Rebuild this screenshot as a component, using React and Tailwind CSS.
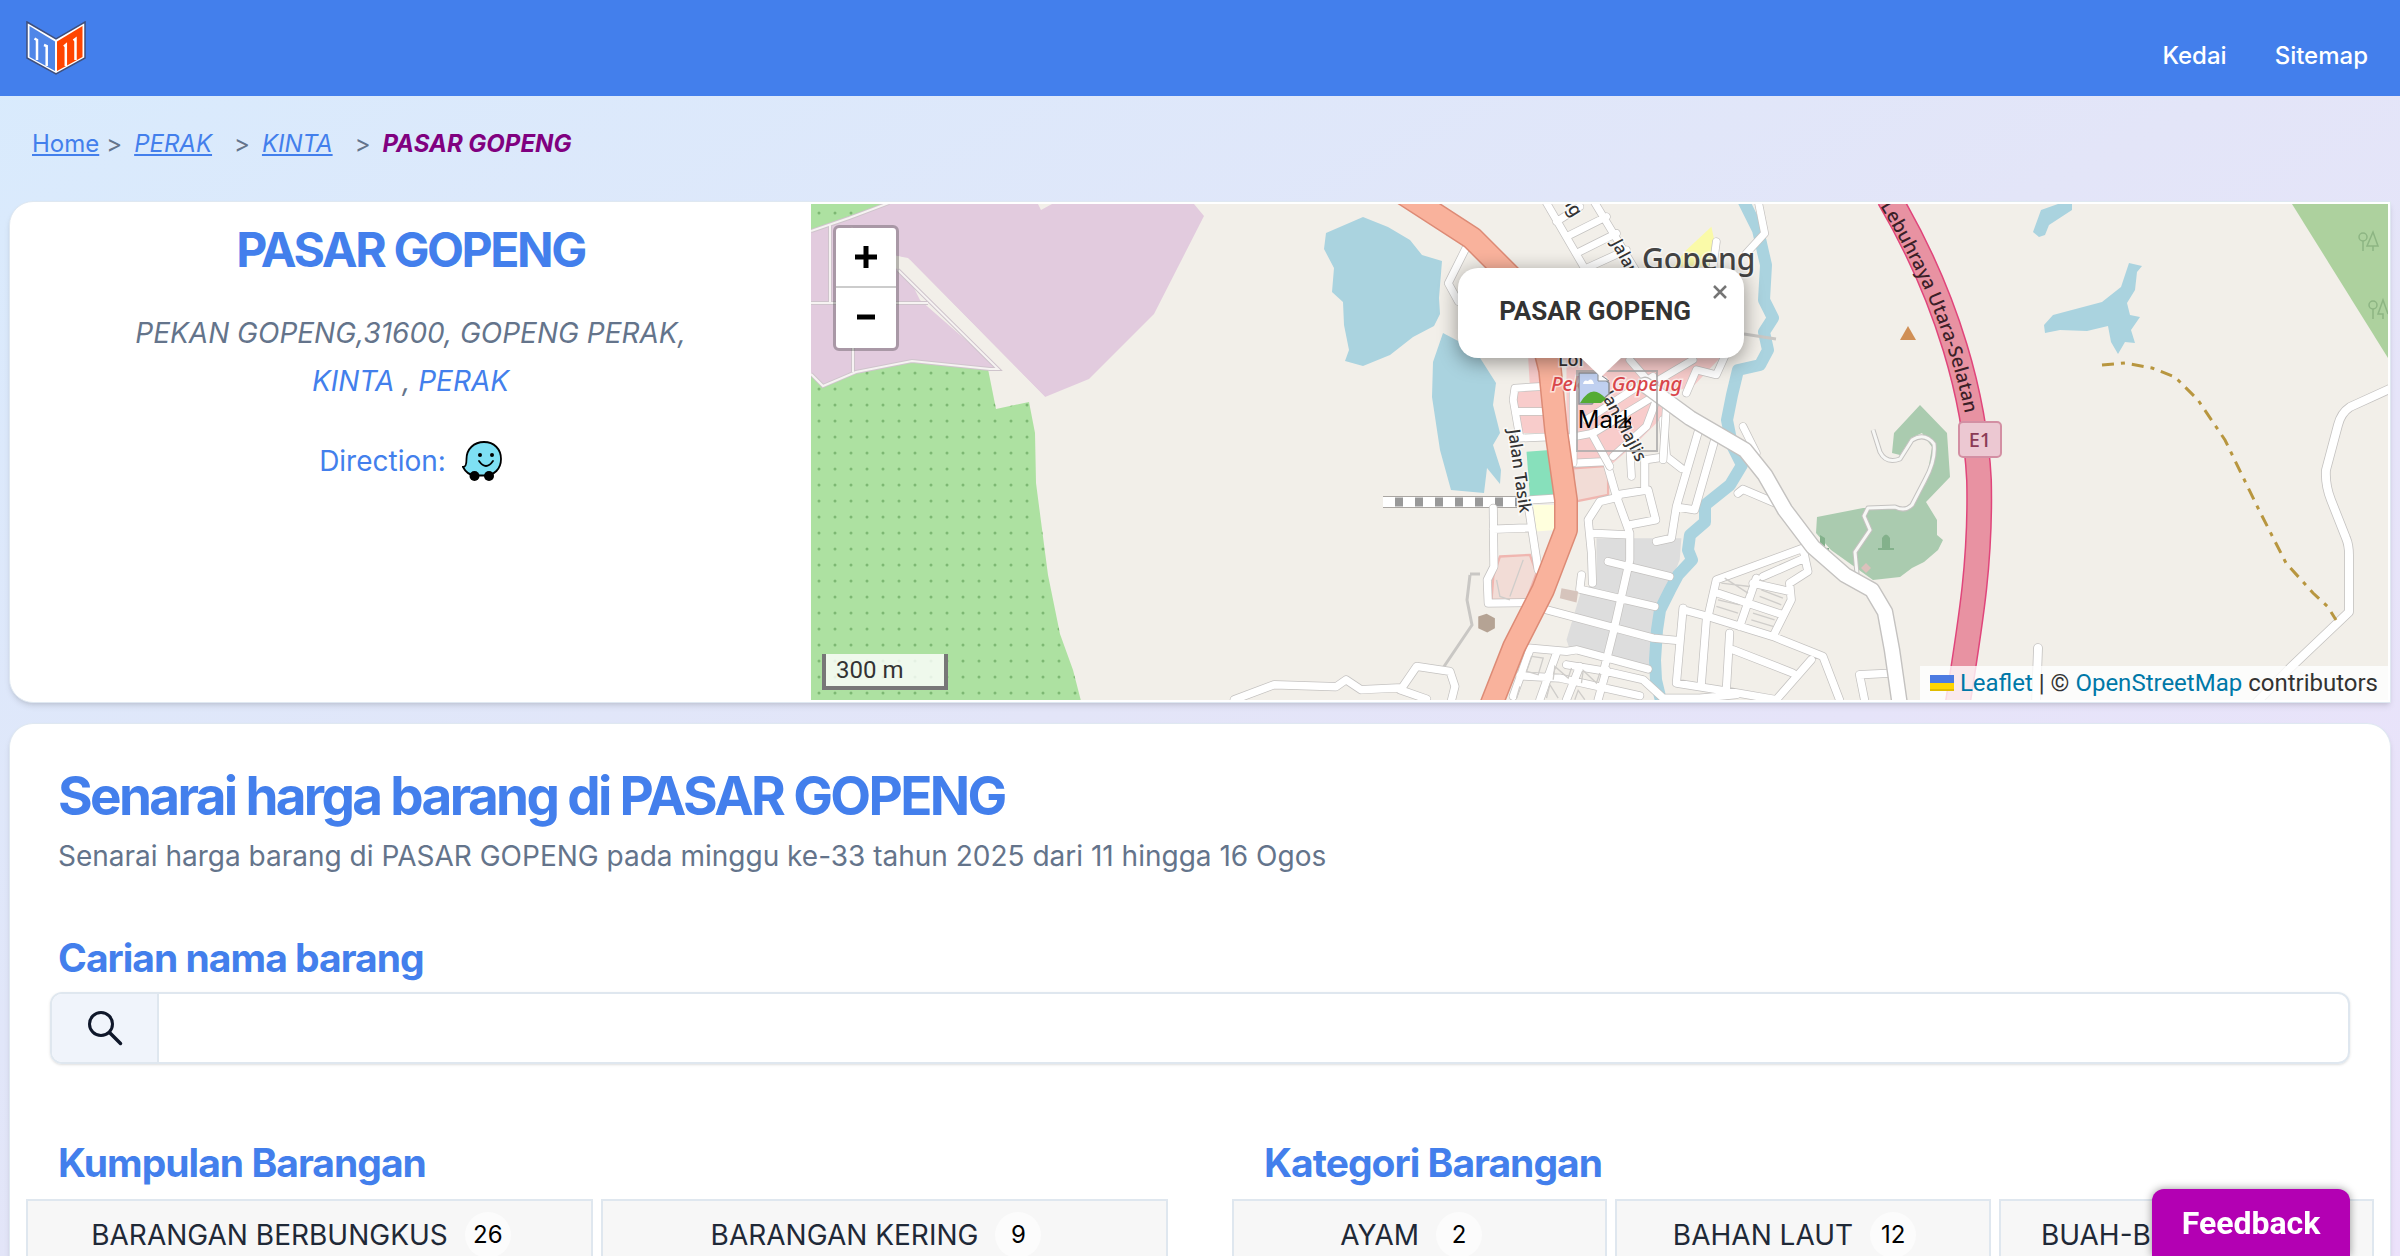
const navLinks = ['Kedai', 'Sitemap'];

const groups = [
  { name: 'BARANGAN BERBUNGKUS', count: 26 },
  { name: 'BARANGAN KERING', count: 9 },
];

const categories = [
  { name: 'AYAM', count: 2 },
  { name: 'BAHAN LAUT', count: 12 },
  { name: 'BUAH-BUAHAN', count: 8 },
];

// street grid, drawn twice: once as casing, once as fill
const townRoads = [
  'M280 265 L282 440 L262 480 L265 550 L420 548',
  'M280 328 L385 324',
  'M385 255 L415 450',
  'M390 240 L470 235',
  'M510 130 L620 125 L650 230 L690 340 L690 420 L640 640 L615 740',
  'M650 225 L745 210 L768 300 L690 315',
  'M655 232 L600 245 L565 300 L575 400 L578 490',
  'M575 340 L685 345',
  'M735 210 L735 120 L800 110 L845 145',
  'M790 0 L800 110',
  'M900 20 L830 260 L815 355 L770 365',
  'M945 60 L885 270 L835 262',
  'M1015 220 L1030 208 L1140 255',
  'M625 425 L810 470',
  'M545 465 L540 508 L765 560',
  'M440 570 L760 655 L830 662',
  'M390 685 L500 695 L530 690 L745 748',
  'M360 768 L480 775 L720 828',
  'M500 735 L620 755 L730 780 L790 835 L900 835 L1010 825',
  'M470 700 L420 840',
  'M540 740 L500 840',
  'M620 750 L595 840',
  'M390 690 L340 830',
  'M850 565 L830 790 L985 815 L1130 840',
  'M850 570 L925 590 L1120 650 L1270 710 L1320 840',
  'M920 600 L905 790',
  'M990 640 L980 810',
  'M925 590 L950 480 L1210 385 L1225 455 L1170 490 L1175 540 L1125 640',
  'M955 520 L1150 585',
  'M1070 475 L1020 620',
  'M1060 490 L1170 515',
  'M1090 470 L1215 415',
  'M1000 690 L1180 760',
  'M1235 720 L1130 840',
  'M1475 760 L1380 765 L1395 840',
  'M-498 840 L-378 795 L-192 801 L-162 780 L-117 810 L6 804 L50 740 L150 755 L165 800 L155 840',
  'M0 810 L80 838',
];

const centreRoads = [
  'M435 0 L560 215',
  'M580 0 L710 215',
  'M470 65 L540 20',
  'M500 110 L620 50',
  'M530 160 L650 100',
  'M560 205 L680 150',
  'M200 140 L145 250 L175 305',
  'M425 560 L345 565 L340 600 L360 715 L440 712',
  'M355 635 L430 635',
  'M500 715 L580 700 L770 585',
  'M520 560 L520 790',
  'M560 660 L760 530',
  'M690 480 L830 640',
  'M860 580 L890 510 L950 525 L975 470',
  'M770 545 L880 480',
  'M770 600 L740 680 L640 770',
  'M575 700 L630 800',
  'M690 740 L695 830',
  'M800 620 L790 780',
  'M950 125 L940 200',
  'M1075 0 L1095 100 L1040 160',
  'M1030 680 L1070 760',
];

const trunkRoad = 'M1404 194 L1472 238 L1510 276 L1540 330 L1550 370 L1556 430 L1566 500 L1566 530 L1543 590 L1514 647 L1490 708';
const motorway = 'M1889 198 C1949 300 1975 400 1979 480 C1981 560 1971 620 1957 708';
const mainRoad = 'M1645 385 L1690 418 L1745 450 L1765 475 L1785 510 L1813 547 L1845 575 L1872 590 L1885 612 L1892 650 L1900 706';
const eastRoad = 'M2394 387 L2350 407 Q2341 413 2338 425 L2326 470 Q2325 485 2331 500 L2346 538 Q2349 545 2349 555 L2349 612 L2290 668 L2255 704';
const orchard = 'M811 204 H889 L849 219 L811 231Z M811 375 L822 387 L856 373 L912 362 L988 369 L996 409 L1029 402 L1035 433 L1036 483 L1048 575 L1060 634 L1073 670 L1081 701 H811Z';
const farmTracks = 'M811 231 L849 218 L889 203 M811 374 L823 386 L856 372 L912 361 L990 369 L998 369 L898 270 M811 303 H928 M853 303 V372 M830 225 V303';
const parkPath = 'M1873 430 L1880 452 Q1886 464 1900 459 L1912 440 Q1925 432 1934 444 Q1936 460 1925 480 L1912 505 Q1905 512 1895 507 L1868 508 L1864 516 L1870 530 L1855 552 L1857 574';

function Logo() {
  return (
    <svg viewBox="0 0 60 54" className="h-[54px] w-[60px]" aria-hidden="true">
      <path d="M1 1 L30 18 L59 1 L59 37 L30 53 L1 37Z" fill="#fff" stroke="#3f4f7c" strokeWidth="1.5" />
      <path d="M3.5 5 L29 20.5 L29 50 L3.5 36Z" fill="#4f86e8" />
      <path d="M56.5 5 L31 20.5 L31 50 L56.5 36Z" fill="#ff4500" />
      <path
        d="M8.5 17.5 L11 19 V39 M18 24 L20.7 25 V45 M38 25.5 L39.8 24 V45 M47.5 19.5 L49.5 18 V39"
        stroke="#fff"
        strokeWidth="2.5"
        fill="none"
      />
    </svg>
  );
}

function WazeIcon() {
  return (
    <svg viewBox="0 0 40 40" className="size-10" aria-hidden="true">
      <path
        d="M22 1 C32 1 39 8 39 18 C39 28 32 34.5 23 34.5 L13 34.5 C7 34 3 30 1 26 C4 26 4.5 23 4.5 18 C4.5 8 12 1 22 1Z"
        fill="#7ee0f4"
        stroke="#000"
        strokeWidth="1.8"
      />
      <circle cx="12.5" cy="35" r="5" />
      <circle cx="27" cy="35" r="5" />
      <circle cx="18" cy="14" r="2" />
      <circle cx="30" cy="14" r="2" />
      <path d="M17 20 Q24 30 31 20" fill="none" stroke="#000" strokeWidth="1.8" strokeLinecap="round" />
    </svg>
  );
}

function BrokenImage() {
  return (
    <svg viewBox="0 0 32 34" className="h-[34px] w-8" aria-hidden="true">
      <path d="M1 1 H20 L31 11 V22 L24 28 L20 25 L14 32 H1Z" fill="#c0d0f0" stroke="#8b8f94" strokeWidth="1.5" />
      <path d="M5 12 Q6 7 10 9 Q14 5 16 12Z" fill="#fff" />
      <path d="M2 31 Q14 10 28 27 L23 31Z" fill="#54ab34" />
      <path d="M20 1 V9 H31Z" fill="#fff" stroke="#8b8f94" />
    </svg>
  );
}

function Roads({ paths, width }) {
  return (
    <g fill="none" strokeLinejoin="round" strokeLinecap="round">
      <path d={paths.join(' ')} stroke="#c4c2c0" strokeWidth={width * 1.2} />
      <path d={paths.join(' ')} stroke="#fff" strokeWidth={width} />
    </g>
  );
}

function MapTiles() {
  return (
    <svg viewBox="811 204 1577 496" preserveAspectRatio="xMidYMid slice" className="block h-full w-full" role="img" aria-label="Peta PASAR GOPENG">
      <defs>
        <pattern id="orchard-dots" x="811" y="205" width="16" height="16" patternUnits="userSpaceOnUse">
          <circle cx="8" cy="8" r="1.5" fill="#7db873" />
        </pattern>
        <path id="motorway-label" d="M1880 206 C1932 290 1957 366 1968 430" />
      </defs>
      <rect x="811" y="204" width="1577" height="497" fill="#f2efe9" />

      {/* land use, west side */}
      <path d="M811 232 L849 219 L889 204 H1038 L1041 210 L1052 204 H1194 L1204 216 L1154 314 L1089 379 L1045 397 L910 260 L898 256 L920 300 L998 368 L990 369 L912 362 L856 373 L823 387 L811 375Z" fill="#e2cbde" />
      <path d="M850 226 L897 256 L908 258 L1045 397 L1025 402 L1000 371 L898 270Z" fill="#f2efe9" />
      <path d={orchard} fill="#ade1a1" />
      <path d={orchard} fill="url(#orchard-dots)" />
      <path d={farmTracks} fill="none" stroke="#cfc4cc" strokeWidth="4" />
      <path d={farmTracks} fill="none" stroke="#f6f3f2" strokeWidth="2" />

      {/* water */}
      <g fill="#aad3df">
        <path d="M1360 217 L1385 227 L1407 240 L1419 255 L1439 261 L1436 298 L1437 314 L1431 326 L1410 337 L1387 355 L1360 366 L1342 361 L1346 350 L1341 325 L1340 302 L1329 292 L1331 268 L1321 249 L1323 233Z" transform="translate(3 0)" />
        <path d="M1443 333 L1433 362 L1432 397 L1440 450 L1451 490 L1484 493 L1487 468 L1500 484 L1501 470 L1493 445 L1500 433 L1493 405 L1496 383 L1475 350 L1460 342Z" />
        <path d="M2041 210 L2058 204 H2072 V210 L2049 225 L2045 235 L2039 237 L2033 232Z" />
        <path d="M2129 263 L2142 266 L2137 272 L2135 290 L2127 303 L2130 315 L2140 317 L2131 330 L2135 343 L2125 342 L2118 354 L2111 342 L2108 326 L2087 331 L2060 330 L2045 333 L2044 325 L2053 315 L2102 302 L2121 287Z" />
      </g>

      {/* woods and cemetery, east side */}
      <path d="M2292 204 H2388 V358Z" fill="#add19e" />
      <g fill="none" stroke="#8db583" strokeWidth="1.5">
        <path d="M2363 251 V241 M2373 251 V246 L2367 246 L2373 232 L2378 246 H2373" />
        <circle cx="2363" cy="237" r="4" />
        <path d="M2373 319 V309 M2383 319 V314 L2378 314 L2383 300 L2388 314" />
        <circle cx="2373" cy="305" r="4" />
      </g>
      <path d="M1817 517 L1863 508 L1911 508 L1926 483 L1932 447 L1922 433 L1911 438 L1900 455 L1892 453 L1894 433 L1920 405 L1947 433 L1950 477 L1926 502 L1937 520 L1937 535 L1943 540 L1938 550 L1924 562 L1912 568 L1900 577 L1873 580 L1831 550 L1816 533Z" fill="#aacbaf" />
      <path d="M1878 549 H1894 M1820 549 H1829" stroke="#83b18b" strokeWidth="2" />
      <path d="M1882 548 V538 Q1886 531 1890 538 V548Z M1820 535 L1825 538 V549 H1820Z" fill="#83b18b" />
      <path d="M1861 568 l5 -5 l5 5 l-5 5Z" fill="#dcc0bb" />
      <path d={parkPath} fill="none" stroke="#c4c2c0" strokeWidth="5" strokeLinejoin="round" />
      <path d={parkPath} fill="none" stroke="#f7f7f5" strokeWidth="3" strokeLinejoin="round" />
      <path d="M1908 326 L1900 340 H1916Z" fill="#d08f55" />

      {/* built-up blocks */}
      <g transform="translate(1400 420) scale(0.333)">
        <path d="M590 355 H845 L840 420 L770 600 L750 740 L510 690 L500 660 L545 510 L590 490Z" fill="#dddddd" />
        <path d="M300 410 L390 405 L410 460 L380 540 L275 540 L280 470Z M520 145 L625 138 L625 225 L525 245Z" fill="#f2dcd6" stroke="#f0b6b0" strokeWidth="7" />
        <path d="M380 95 L450 90 L465 230 L390 230Z" fill="#87e0bb" />
        <path d="M400 255 H470 L465 330 L410 335Z" fill="#ffffdd" />
        <path d="M235 590 L260 582 L285 595 L285 625 L262 638 L235 625Z" fill="#b5a394" />
      </g>
      <g transform="translate(1400 200) scale(0.333)">
        <path d="M385 475 H960 L880 560 L760 590 L800 640 L720 720 L640 790 H500 V480 L440 480 V700 H350 V560 H390Z" fill="#f8cccb" />
        <path d="M860 150 L935 80 L945 125 L930 200 H820Z" fill="#fafaa8" />
      </g>

      <path d="M1742 198 L1758 230 L1766 265 L1764 300 L1773 318 L1764 332 L1768 350 L1760 365 L1738 370 L1732 395 L1727 420 L1732 445 L1742 465 L1730 485 L1705 505 L1705 522 L1690 535 L1688 550 L1692 560 L1678 575 L1670 590 L1660 610 L1657 630 L1655 660 L1656 680 L1662 705" fill="none" stroke="#aad3df" strokeWidth="12" strokeLinejoin="round" />

      <path d="M1383 502 H1517" stroke="#aaa6a2" strokeWidth="12" />
      <path d="M1383 502 H1517" stroke="#fff" strokeWidth="10" />
      <path d="M1395 502 H1517" stroke="#999" strokeWidth="9" strokeDasharray="8 12" />

      <path d="M1470 575 L1467 600 L1472 625 L1443 668 M1480 574 H1470 M1744 334 L1776 339" fill="none" stroke="#c9c7c4" strokeWidth="3" />

      <g transform="translate(1400 420) scale(0.333)">
        <Roads paths={townRoads} width={22} />
        <path d="M485 505 L535 515 L530 548 L480 535Z" fill="#d6c4bc" />
        <g fill="none" stroke="#cfcdca" strokeWidth="4">
          <path d="M395 710 L430 715 L415 765 L380 755Z M460 780 L465 740 L505 775 L515 745 M545 790 L550 752 L590 790 L600 760 M360 800 L350 835 M440 835 L450 795 L475 835 M525 840 L535 812 L555 840" />
          <path d="M965 490 L1050 500 M975 475 L1045 520 M955 540 L1020 555 M950 560 L1015 580 M1085 510 L1150 535 M1080 530 L1145 555 M1060 580 L1125 600 M1055 600 L1120 620 M330 530 L370 420 M290 480 L300 530 L330 540" />
        </g>
      </g>
      <g transform="translate(1400 200) scale(0.333)">
        <Roads paths={centreRoads} width={21} />
      </g>

      <Roads paths={[eastRoad, 'M2038 648 L2036 704']} width={8} />
      <Roads paths={[mainRoad]} width={14} />
      <path d="M2102 365 L2125 363 L2152 368 L2175 377 L2198 400 L2225 440 L2259 510 L2286 563 L2313 593 L2328 607 L2336 620" fill="none" stroke="#b8963f" strokeWidth="3" strokeDasharray="12 7 4 7" />

      <g fill="none" strokeLinejoin="round">
        <path d={trunkRoad} stroke="#dd8b76" strokeWidth="24" />
        <path d={trunkRoad} stroke="#f9b29c" strokeWidth="21" />
        <path d={motorway} stroke="#e0457b" strokeWidth="26" />
        <path d={motorway} stroke="#e892a2" strokeWidth="23" />
      </g>
      <rect x="1959" y="422" width="42" height="35" rx="4" fill="#ecc8d2" stroke="#d38fa3" strokeWidth="2" />

      <g fontFamily="Noto Sans, sans-serif" fontWeight="500" fill="#333" stroke="#fff" strokeWidth="3" strokeOpacity="0.6" paintOrder="stroke">
        <text x="1642" y="270" fontSize="30" fill="#444">Gopeng</text>
        <text x="1551" y="391" fontSize="20" fontStyle="italic" fill="#d9464b">Pekan Gopeng</text>
        <text x="1558" y="366" fontSize="18">Lor</text>
        <text transform="translate(1508 430) rotate(82)" fontSize="17">Jalan Tasik</text>
        <text transform="translate(1611 243) rotate(62)" fontSize="17">Jalan</text>
        <text transform="translate(1594 382) rotate(62)" fontSize="17">Jalan Majlis</text>
        <text transform="translate(1561 199) rotate(58)" fontSize="18">ng</text>
        <text x="1980" y="447" fontSize="20" textAnchor="middle" fill="#8b3a55" strokeWidth="0">E1</text>
      </g>
      <text fontFamily="Noto Sans, sans-serif" fontWeight="500" fontSize="19" fill="#3b1f28">
        <textPath href="#motorway-label">Lebuhraya Utara-Selatan</textPath>
      </text>
    </svg>
  );
}

function MarketMap() {
  return (
    <div className="relative h-[496px] overflow-hidden font-[Roboto,sans-serif] text-2xl text-[#333]">
      <MapTiles />

      <div className="absolute left-[22px] top-[21px] flex flex-col rounded-md border-3 border-black/25 bg-clip-padding">
        <button aria-label="Zoom in" className="flex h-15 w-15 items-center justify-center rounded-t-sm border-b-2 border-[#ccc] bg-white">
          <svg viewBox="0 0 22 22" className="size-[22px]"><path d="M11 0 V22 M0 11 H22" stroke="#000" strokeWidth="5" /></svg>
        </button>
        <button aria-label="Zoom out" className="flex h-15 w-15 items-center justify-center rounded-b-sm bg-white">
          <svg viewBox="0 0 22 22" className="size-[22px]"><path d="M2 10 H20" stroke="#000" strokeWidth="5" /></svg>
        </button>
      </div>

      <div className="absolute bottom-[10px] left-[11px] h-9 w-[126px] border-4 border-t-0 border-[#777] bg-white/80 px-[10px] leading-8">
        300 m
      </div>

      {/* marker image that failed to load, with its alt text */}
      <div className="absolute left-[48.5%] top-[166px] size-[82px] border-2 border-[#a9a9a9]/80 font-[Inter,sans-serif] text-black">
        <BrokenImage />
        <div className="w-[53px] overflow-hidden leading-7">Mark</div>
      </div>

      <div className="absolute left-[50.1%] top-16 -translate-x-1/2">
        <div className="relative flex h-[90px] w-[286px] items-center justify-center rounded-[20px] bg-white pb-1 pr-3 shadow-[0_4px_20px_rgba(0,0,0,0.4)]">
          <b className="text-[26px]">PASAR GOPENG</b>
          <button aria-label="Close popup" className="absolute right-2 top-2 flex size-8 items-center justify-center text-[#757575]">
            <svg viewBox="0 0 14 14" className="size-[14px]"><path d="M1 1 L13 13 M13 1 L1 13" stroke="currentColor" strokeWidth="2.5" /></svg>
          </button>
        </div>
        <svg viewBox="0 0 40 19" className="relative mx-auto block h-[19px] w-10"><path d="M0 0 H40 L20 19Z" fill="#fff" /></svg>
      </div>

      <div className="absolute bottom-0 right-0 flex h-[34px] items-center whitespace-pre bg-white/80 px-[10px]">
        <svg viewBox="0 0 24 16" className="mr-1.5 h-4 w-6"><path fill="#4c7be1" d="M0 0h24v8H0z" /><path fill="#ffd500" d="M0 8h24v6H0z" /><path fill="#e0bc00" d="M0 14h24v2H0z" /></svg>
        <a href="#leaflet" className="text-[#0078a8]">Leaflet</a>
        <span> | © </span>
        <a href="#osm" className="text-[#0078a8]">OpenStreetMap</a>
        <span> contributors</span>
      </div>
    </div>
  );
}

function Tile({ name, count }) {
  return (
    <button className="flex h-[72px] min-w-0 items-center justify-center overflow-hidden whitespace-nowrap border-2 border-[#dfe7ef] bg-[#f7f7f7] text-[28px] text-[#1f2937]">
      {name}
      <span className="mx-[17px] flex size-[46px] shrink-0 items-center justify-center rounded-full bg-[#fcfcfc] text-2xl text-black">{count}</span>
    </button>
  );
}

export default function App() {
  return (
    <div className="min-h-screen bg-linear-to-br from-[#d8ebfd] via-[#e3e5f8] to-[#ece2fb] font-[Inter,sans-serif] text-[#64748b]">
      <header className="flex h-24 items-center justify-between bg-[#437fec] pl-[26px] pr-8">
        <a href="#home" aria-label="Laman utama"><Logo /></a>
        <nav className="flex gap-12 pt-4 text-2xl font-medium text-white">
          {navLinks.map((label) => (
            <a key={label} href="#nav">{label}</a>
          ))}
        </nav>
      </header>

      <nav aria-label="Breadcrumb" className="flex h-[105px] items-start px-8 pt-8 text-2xl">
        <a href="#home" className="text-[#437fec] underline">Home</a>
        <span className="ml-[7px] mr-3">&gt;</span>
        <a href="#perak" className="mr-[22px] italic text-[#437fec] underline">PERAK</a>
        <span className="mr-3">&gt;</span>
        <a href="#kinta" className="mr-[22px] italic text-[#437fec] underline">KINTA</a>
        <span className="mr-3">&gt;</span>
        <span className="font-bold italic text-[#800080]">PASAR GOPENG</span>
      </nav>

      <main className="px-[9px]">
        <section className="grid grid-cols-[801fr_1577fr] overflow-hidden rounded-l-3xl border border-[#dfe8f1] bg-white py-0.5 pr-0.5 shadow-md">
          <div className="flex flex-col items-center pt-3.5 text-center text-[28px]">
            <h1 className="text-5xl font-bold leading-16 tracking-tighter text-[#437fec]">PASAR GOPENG</h1>
            <address className="mt-[27px] leading-12">
              PEKAN GOPENG,31600, GOPENG PERAK,
              <br />
              <a href="#kinta" className="text-[#437fec]">KINTA</a> , <a href="#perak" className="text-[#437fec]">PERAK</a>
            </address>
            <a href="#direction" className="mt-8 flex items-center gap-4 leading-12 text-[#437fec]">
              Direction: <WazeIcon />
            </a>
          </div>
          <MarketMap />
        </section>

        <section className="mt-5 rounded-t-3xl border border-b-0 border-[#dfe8f1] bg-white px-4 pt-10 shadow-md">
          <div className="px-8">
            <h2 className="text-[53px] font-bold leading-16 tracking-tighter text-[#437fec]">Senarai harga barang di PASAR GOPENG</h2>
            <p className="mt-2 text-[28px] leading-10">
              Senarai harga barang di PASAR GOPENG pada minggu ke-33 tahun 2025 dari 11 hingga 16 Ogos
            </p>
          </div>

          <label htmlFor="search" className="mt-[58px] block px-8 text-[39px] font-bold leading-12 tracking-tight text-[#437fec]">
            Carian nama barang
          </label>
          <div className="mx-6 mt-[10px] flex h-[72px] overflow-hidden rounded-xl border-2 border-[#dfe7ef] shadow-sm">
            <span className="flex w-[107px] items-center justify-center border-r-2 border-[#dfe7ef] bg-[#f0f4fb]">
              <svg viewBox="0 0 36 36" className="size-9"><path d="M22.5 22.5 L33.5 33.5" stroke="#0f172a" strokeWidth="3.5" strokeLinecap="round" /><circle cx="14" cy="14" r="11.5" fill="none" stroke="#0f172a" strokeWidth="3" /></svg>
            </span>
            <input id="search" type="text" className="min-w-0 flex-1 px-6 text-2xl outline-none" />
          </div>

          <div className="mt-[75px] grid grid-cols-2 gap-16">
            <div>
              <h3 className="px-8 text-[39px] font-bold leading-12 tracking-tight text-[#437fec]">Kumpulan Barangan</h3>
              <div className="mt-3 grid grid-cols-2 gap-2">
                {groups.map((item) => <Tile key={item.name} {...item} />)}
              </div>
            </div>
            <div>
              <h3 className="px-8 text-[39px] font-bold leading-12 tracking-tight text-[#437fec]">Kategori Barangan</h3>
              <div className="mt-3 grid grid-cols-3 gap-2">
                {categories.map((item) => <Tile key={item.name} {...item} />)}
              </div>
            </div>
          </div>
        </section>
      </main>

      <button className="fixed bottom-0 right-[50px] h-[67px] w-[198px] rounded-t-xl bg-[#b300b3] font-[Roboto,sans-serif] text-[32px] font-bold text-white shadow-[0_0_8px_rgba(0,0,0,0.4)]">
        Feedback
      </button>
    </div>
  );
}
